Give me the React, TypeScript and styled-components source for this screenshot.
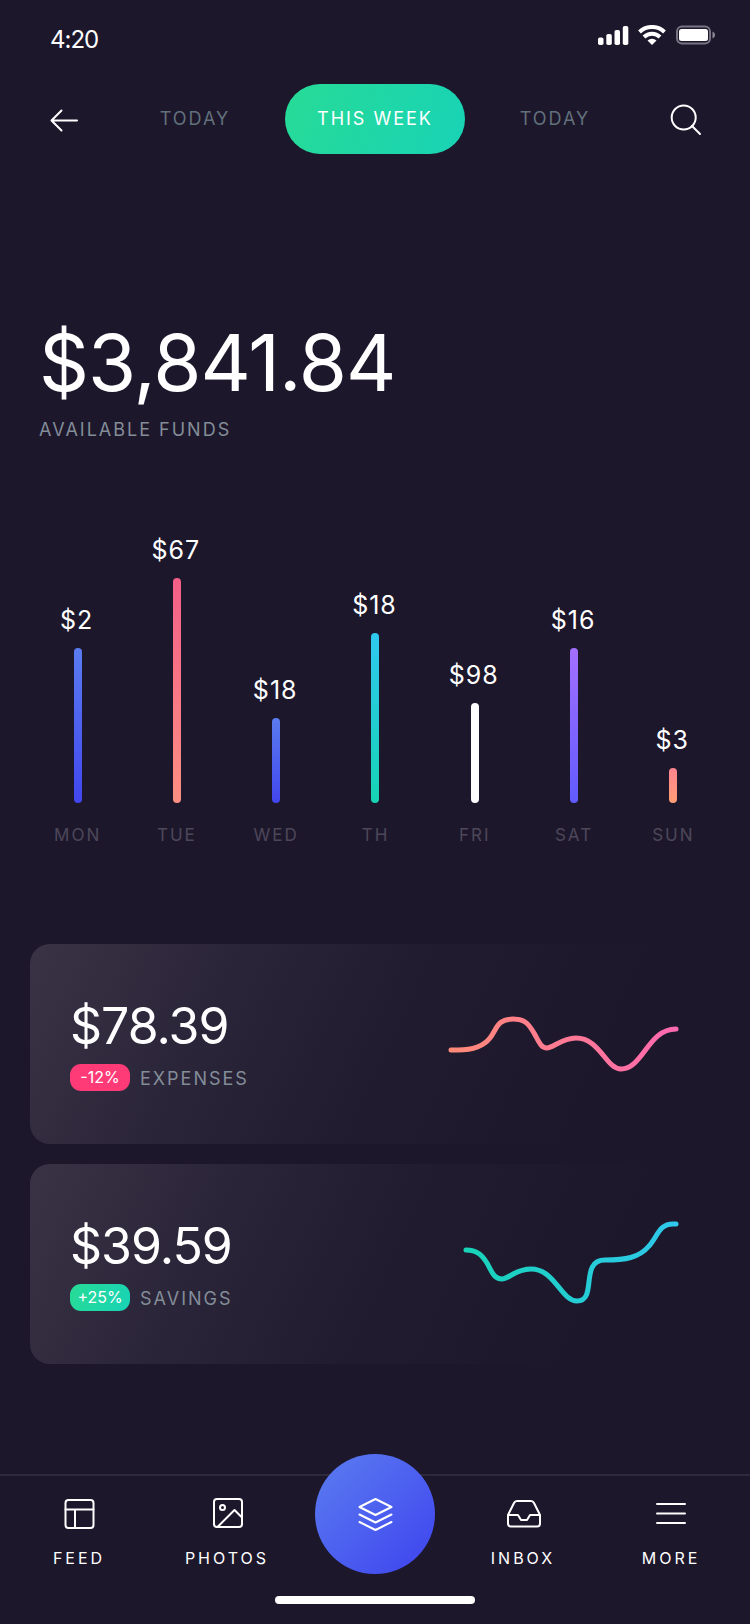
import React from "react";
import styled, { createGlobalStyle } from "styled-components";

const GlobalStyle = createGlobalStyle`
  *, *::before, *::after { box-sizing: border-box; }
  body {
    margin: 0;
    background: #1d172c;
    color: #fff;
    font-family: Inter, "Liberation Sans", sans-serif;
    font-weight: 400;
  }
  button { font: inherit; color: inherit; background: none; border: 0; padding: 0; cursor: pointer; }
  h1, h2, p, ul { margin: 0; padding: 0; font-weight: inherit; }
  svg { display: block; }
`;

const Screen = styled.div`
  min-height: 100vh;
  display: flex;
  flex-direction: column;
`;

const StatusBar = styled.div`
  display: flex;
  justify-content: space-between;
  height: 84px;
  padding: 25px 34px 0 50px;
`;

const Clock = styled.time`
  font-size: 24px;
  line-height: 30px;
  letter-spacing: -1px;
`;

const Header = styled.header`
  display: flex;
  align-items: center;
`;

const IconButton = styled.button<{ $side: "left" | "right" }>`
  flex: 1;
  display: flex;
  justify-content: ${(p) => (p.$side === "left" ? "flex-start" : "flex-end")};
  padding: ${(p) => (p.$side === "left" ? "2px 0 0 48px" : "2px 48px 0 0")};
`;

const Tabs = styled.nav`
  display: flex;
`;

const Tab = styled.button<{ $active?: boolean }>`
  width: 180px;
  height: 70px;
  border-radius: 35px;
  font-size: 18px;
  line-height: 24px;
  letter-spacing: 2px;
  color: ${(p) => (p.$active ? "#fff" : "#62707c")};
  background: ${(p) => (p.$active ? "linear-gradient(110deg, #27db96, #18d3b6)" : "none")};
`;

const Funds = styled.section`
  padding: 0 39px;
  margin-top: 161px;
`;

const Total = styled.h1`
  font-size: 78px;
  line-height: 96px;
  letter-spacing: -1px;
`;

const Caption = styled.p`
  font-size: 18px;
  line-height: 24px;
  letter-spacing: 2px;
  color: #838d98;
`;

const FundsCaption = styled(Caption)`
  margin-top: 7px;
`;

const Chart = styled.ul`
  display: flex;
  align-items: flex-end;
  list-style: none;
  margin: 92px 27px 0 28px;
`;

const Day = styled.li`
  flex: 1;
  display: flex;
  flex-direction: column;
  align-items: center;
`;

const Amount = styled.span`
  padding-right: 2px;
  font-size: 25px;
  line-height: 32px;
  letter-spacing: 1px;
  margin-bottom: 12px;
`;

const Bar = styled.span<{ $from: string; $to: string }>`
  width: 8px;
  border-radius: 4px;
  background: linear-gradient(${(p) => p.$from}, ${(p) => p.$to});
`;

const DayName = styled.span`
  margin-top: 20px;
  font-size: 17px;
  line-height: 24px;
  letter-spacing: 2px;
  color: #4d4759;
`;

const Cards = styled.section`
  display: grid;
  gap: 20px;
  margin: 97px 30px 0;
`;

const Card = styled.article`
  display: flex;
  align-items: center;
  justify-content: space-between;
  height: 200px;
  padding: 0 40px;
  border-radius: 20px;
  background: linear-gradient(115deg, #3a3346, #2b2539 26%, #221c31 50%, #1d172c 80%);
`;

const CardText = styled.div`
  padding-bottom: 2px;
`;

const CardAmount = styled.h2`
  font-size: 50px;
  line-height: 60px;
  letter-spacing: -1px;
`;

const CardMeta = styled.div`
  display: flex;
  align-items: flex-end;
  gap: 10px;
  margin-top: 8px;
`;

const Badge = styled.span<{ $fill: string }>`
  width: 60px;
  border-radius: 11px;
  font-size: 16px;
  line-height: 27px;
  text-align: center;
  background: ${(p) => p.$fill};
`;

const TabBar = styled.nav`
  display: grid;
  grid-template-columns: repeat(5, 1fr);
  height: 120px;
  margin-top: auto;
  padding: 0 5px;
  border-top: 2px solid #2f293d;
`;

const NavItem = styled.button`
  display: flex;
  flex-direction: column;
  align-items: center;
  align-self: start;
  padding: 20px 0 0;
  font-size: 16px;
  line-height: 24px;
  letter-spacing: 3px;

  svg { margin-bottom: 14px; }
`;

const MainAction = styled.button`
  display: grid;
  place-items: center;
  justify-self: center;
  width: 120px;
  height: 120px;
  margin-top: -22px;
  border-radius: 50%;
  background: linear-gradient(135deg, #5b7df0, #3e43ee);
`;

const HomeIndicator = styled.div`
  width: 200px;
  height: 8px;
  margin: 2px auto 20px;
  border-radius: 4px;
  background: #fff;
`;

const days = [
  { name: "MON", amount: "$2", height: 155, from: "#5a7cf0", to: "#4146ee" },
  { name: "TUE", amount: "$67", height: 225, from: "#f45f88", to: "#fd8f82" },
  { name: "WED", amount: "$18", height: 85, from: "#5a7cf0", to: "#4146ee" },
  { name: "TH", amount: "$18", height: 170, from: "#2fc8f0", to: "#16d3b4" },
  { name: "FRI", amount: "$98", height: 100, from: "#fff", to: "#fff" },
  { name: "SAT", amount: "$16", height: 155, from: "#a36fff", to: "#615bff" },
  { name: "SUN", amount: "$3", height: 35, from: "#ff8590", to: "#ff9d75" },
];

const cards = [
  {
    label: "EXPENSES",
    amount: "$78.39",
    change: "-12%",
    fill: "#ff3b77",
    from: "#ff8a78",
    to: "#ff69b0",
    path: "M11 56H18C33 56 43 53 50 44C57 35 57 25 73 25C86 25 89 31 94 39C99 48 101 54 107 54C113 54 122 44 136 44C160 44 166 75 181 75C203 75 208 35 236 35",
  },
  {
    label: "SAVINGS",
    amount: "$39.59",
    change: "+25%",
    fill: "linear-gradient(110deg, #27db96, #18d3b6)",
    from: "#18d3b8",
    to: "#2fc8ec",
    path: "M26 36C37 36 42 41 47 49C52 58 54 65 62 65C69 65 75 55 91 55C115 55 121 87 137 87C158 87 139 46 165 46C185 46 199 44 209 32C218 22 219 10 233 10H236",
  },
];

const BackIcon = () => (
  <svg width="32" height="32" viewBox="0 0 32 32" fill="none" stroke="#fff" strokeWidth="2" strokeLinecap="round" strokeLinejoin="round">
    <path d="M29 16.500H3.500M13.500 6.500L3.500 16.500L13.500 26.500" />
  </svg>
);

const SearchIcon = () => (
  <svg width="32" height="32" viewBox="0 0 32 32" fill="none" stroke="#fff" strokeWidth="2" strokeLinecap="round">
    <circle cx="13.700" cy="13.500" r="12" />
    <path d="M22 22L30 30" />
  </svg>
);

const StatusIcons = () => (
  <svg width="118" height="22" viewBox="0 0 118 22" fill="#fff" role="img" aria-label="Signal, Wi-Fi and battery">
    <rect x="0" y="12.500" width="5.500" height="7.500" rx="1.800" />
    <rect x="8.300" y="9" width="5.500" height="11" rx="1.800" />
    <rect x="16.500" y="5" width="5.500" height="15" rx="1.800" />
    <rect x="24.800" y="1" width="5.500" height="19" rx="1.800" />
    <g fill="none" stroke="#fff" strokeWidth="4">
      <path d="M41.500 7A18 18 0 0 1 66.500 7" />
      <path d="M46 12A11.500 11.500 0 0 1 62 12" />
    </g>
    <path d="M49.500 15.500A7 7 0 0 1 58.500 15.500L54 20Z" />
    <rect x="79" y="1.500" width="33" height="17" rx="5" fill="none" stroke="#fff" strokeOpacity=".4" strokeWidth="2" />
    <rect x="81" y="4" width="29" height="12" rx="2.500" />
    <path d="M114.500 6.500C117.800 8 117.800 12 114.500 13.500Z" opacity=".5" />
  </svg>
);

const iconProps = {
  width: 36,
  height: 36,
  viewBox: "0 0 36 36",
  fill: "none",
  stroke: "#fff",
  strokeWidth: 2,
  strokeLinecap: "round" as const,
  strokeLinejoin: "round" as const,
};

const FeedIcon = () => (
  <svg {...iconProps}>
    <rect x="4.500" y="4" width="28" height="28" rx="3" />
    <path d="M4.500 13.500H32.500M14 13.500V32" />
  </svg>
);

const PhotosIcon = () => (
  <svg {...iconProps}>
    <rect x="5" y="3" width="28" height="28" rx="3" />
    <circle cx="13.500" cy="11.500" r="2.500" />
    <path d="M9 30.500L25.500 14L32.500 21" />
  </svg>
);

const LayersIcon = () => (
  <svg {...iconProps}>
    <path d="M18.500 3L34.500 11L18.500 19L2.500 11ZM2.500 18.500L18.500 26.500L34.500 18.500M2.500 26L18.500 34L34.500 26" />
  </svg>
);

const InboxIcon = () => (
  <svg {...iconProps}>
    <path d="M3 19V27.500Q3 30.500 6 30.500H32Q35 30.500 35 27.500V19L29 7Q28 5 26 5H12Q10 5 9 7L3 19H13L16 24H22L25 19H35" />
  </svg>
);

const MoreIcon = () => (
  <svg {...iconProps}>
    <path d="M4 8H32M4 17.500H32M4 27H32" />
  </svg>
);

export default function App() {
  return (
    <Screen>
      <GlobalStyle />
      <StatusBar>
        <Clock>4:20</Clock>
        <StatusIcons />
      </StatusBar>
      <Header>
        <IconButton $side="left" aria-label="Back"><BackIcon /></IconButton>
        <Tabs aria-label="Period">
          <Tab>TODAY</Tab>
          <Tab $active aria-current="true">THIS WEEK</Tab>
          <Tab>TODAY</Tab>
        </Tabs>
        <IconButton $side="right" aria-label="Search"><SearchIcon /></IconButton>
      </Header>
      <main>
        <Funds>
          <Total>$3,841.84</Total>
          <FundsCaption>AVAILABLE FUNDS</FundsCaption>
        </Funds>
        <Chart>
          {days.map((d) => (
            <Day key={d.name}>
              <Amount>{d.amount}</Amount>
              <Bar $from={d.from} $to={d.to} style={{ height: d.height }} />
              <DayName>{d.name}</DayName>
            </Day>
          ))}
        </Chart>
        <Cards>
          {cards.map((c) => (
            <Card key={c.label}>
              <CardText>
                <CardAmount>{c.amount}</CardAmount>
                <CardMeta>
                  <Badge $fill={c.fill}>{c.change}</Badge>
                  <Caption>{c.label}</Caption>
                </CardMeta>
              </CardText>
              <svg width="240" height="100" viewBox="0 0 240 100" fill="none" aria-hidden="true">
                <defs>
                  <linearGradient id={c.label} x1="0" y1="0" x2="1" y2="0">
                    <stop stopColor={c.from} />
                    <stop offset="1" stopColor={c.to} />
                  </linearGradient>
                </defs>
                <path d={c.path} stroke={`url(#${c.label})`} strokeWidth="5" strokeLinecap="round" />
              </svg>
            </Card>
          ))}
        </Cards>
      </main>
      <TabBar aria-label="Main">
        <NavItem><FeedIcon />FEED</NavItem>
        <NavItem><PhotosIcon />PHOTOS</NavItem>
        <MainAction aria-label="Stacks"><LayersIcon /></MainAction>
        <NavItem><InboxIcon />INBOX</NavItem>
        <NavItem><MoreIcon />MORE</NavItem>
      </TabBar>
      <HomeIndicator />
    </Screen>
  );
}
